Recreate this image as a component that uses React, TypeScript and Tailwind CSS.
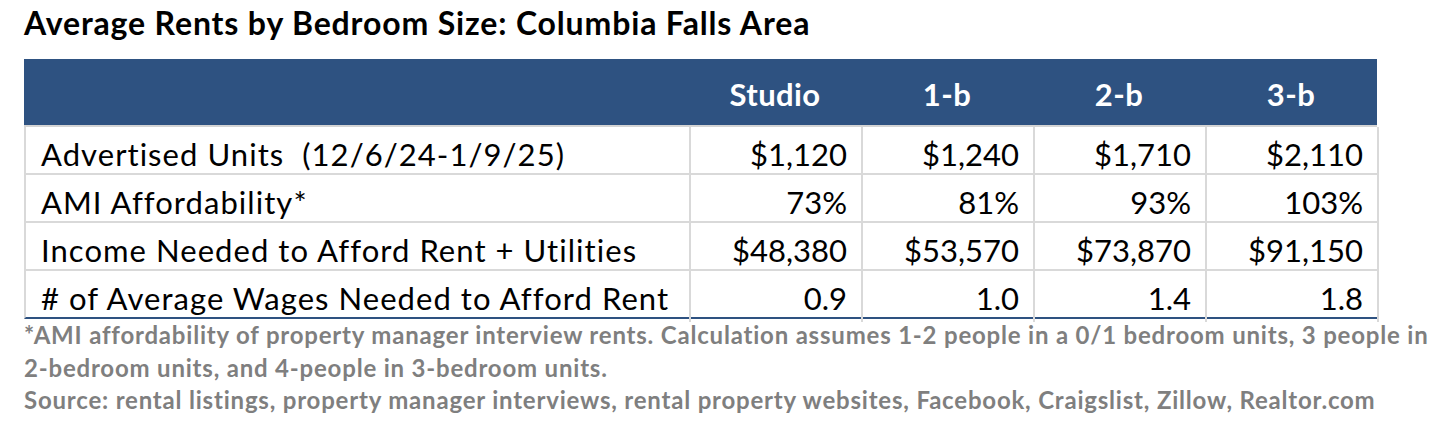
const rows = [
  { label: "Advertised Units  (12/6/24-1/9/25)", values: ["$1,120", "$1,240", "$1,710", "$2,110"] },
  { label: "AMI Affordability*", values: ["73%", "81%", "93%", "103%"] },
  { label: "Income Needed to Afford Rent + Utilities", values: ["$48,380", "$53,570", "$73,870", "$91,150"] },
  { label: "# of Average Wages Needed to Afford Rent", values: ["0.9", "1.0", "1.4", "1.8"] },
];

const sizes = ["Studio", "1-b", "2-b", "3-b"];

export default function App() {
  return (
    <div className="h-[430px] w-[1440px] overflow-hidden bg-white pl-6 font-['Lato',_sans-serif] text-black">
      <h1 className="pt-[5px] text-[32px] font-bold leading-[36px] tracking-[0.85px]">
        Average Rents by Bedroom Size: Columbia Falls Area
      </h1>

      <div className="mt-[18px] w-[1353px]">
        <div className="grid h-[66px] grid-cols-[665px_172px_172px_172px_172px] bg-[#2e5281] pt-1 text-[31px] font-bold tracking-[0.4px] text-white">
          <div />
          {sizes.map((size) => (
            <div key={size} className="flex items-center justify-center">
              {size}
            </div>
          ))}
        </div>

        <div className="border-t-2 border-[#d4d4d4]">
          {rows.map((row, i) => (
            <div
              key={row.label}
              className={
                i === rows.length - 1
                  ? "grid h-[48px] grid-cols-[665px_172px_172px_172px_172px] border-b-2 border-l-2 border-b-[#2e5281] border-l-[#d9d9d9] text-[31px]"
                  : "grid h-[48px] grid-cols-[665px_172px_172px_172px_172px] border-b-2 border-l-2 border-[#d9d9d9] text-[31px]"
              }
            >
              <div className="flex items-center border-r-2 border-[#d9d9d9] pl-[15px] pt-1 tracking-[1.05px] whitespace-pre">
                {row.label}
              </div>
              {row.values.map((value, j) => (
                <div
                  key={j}
                  className="flex items-center justify-end border-r-2 border-[#d9d9d9] pr-[14px] pt-1"
                >
                  {value}
                </div>
              ))}
            </div>
          ))}
        </div>
      </div>

      <div className="text-[24px] font-bold leading-[32.5px] tracking-[0.8px] text-[#7f7f7f]">
        <p>
          *AMI affordability of property manager interview rents. Calculation assumes 1-2 people in a 0/1 bedroom units, 3 people in
        </p>
        <p>2-bedroom units, and 4-people in 3-bedroom units.</p>
        <p>
          Source: rental listings, property manager interviews, rental property websites, Facebook, Craigslist, Zillow, Realtor.com
        </p>
      </div>
    </div>
  );
}
